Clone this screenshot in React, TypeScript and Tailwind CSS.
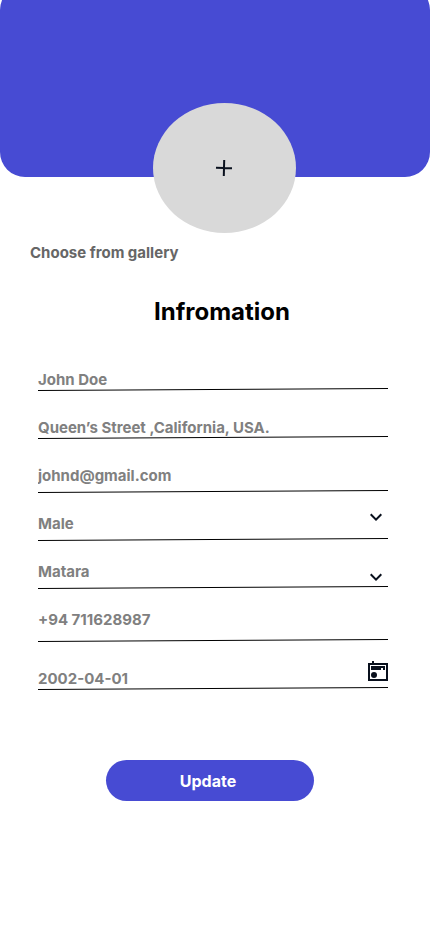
import type { ReactNode } from "react";

const fieldText =
  "-ml-1 block h-5 w-full appearance-none bg-transparent p-0 pl-1 text-[15px] leading-5 font-bold text-[#808080] outline-none";

function Underline() {
  return (
    <svg className="-mt-[2px] block h-[3px] w-full" viewBox="0 0 350 3" preserveAspectRatio="none" aria-hidden="true">
      <path d="M0 2.5L350 0.5" stroke="#000" strokeWidth="1" fill="none" />
    </svg>
  );
}

function Chevron({ className }: { className: string }) {
  return (
    <svg className={`pointer-events-none absolute right-0 size-6 ${className}`} viewBox="0 0 24 24" fill="#09101D" aria-hidden="true">
      <path d="M7.41 8.58L12 13.17l4.59-4.59L18 10l-6 6-6-6z" />
    </svg>
  );
}

function CalendarIcon() {
  return (
    <svg className="block size-5" viewBox="0 0 20 20" fill="#09101D" aria-hidden="true">
      <path fillRule="evenodd" d="M4 0h2v2h14v18H0V2h4zM2 4v14h16V4z" />
      <path d="M3 5h14v4h-2V7h-2v2H3z" />
      <circle cx="6" cy="14" r="3" />
    </svg>
  );
}

function Field({ spacing, children }: { spacing: string; children: ReactNode }) {
  return (
    <div className={`relative ${spacing}`}>
      {children}
      <Underline />
    </div>
  );
}

export default function App() {
  return (
    <main className="flex min-h-screen flex-col overflow-hidden bg-white font-['Inter',sans-serif]">
      <header className="-mt-[15px] h-48 rounded-[25px] bg-[#474BD3]" />

      <div className="-mt-[74px] flex justify-center pl-[19px]">
        <button
          type="button"
          aria-label="Add photo"
          className="flex h-[130px] w-[143px] items-center justify-center rounded-[50%] bg-[#D9D9D9] pr-px"
        >
          <svg className="size-6" viewBox="0 0 24 24" stroke="#09101D" strokeWidth="2" aria-hidden="true">
            <path d="M12.2 4L11.8 20M4 11.8L20 12.2" />
          </svg>
        </button>
      </div>

      <button
        type="button"
        className="mt-[10px] ml-[30px] self-start text-[15px] leading-5 font-bold text-[#666666]"
      >
        Choose from gallery
      </button>

      <h1 className="mt-[33px] pl-[14px] text-center text-2xl leading-8 font-bold text-black">Infromation</h1>

      <form className="mt-[42px] flex flex-col pr-[42px] pl-[38px]" onSubmit={(e) => e.preventDefault()}>
        <Field spacing="mb-[27px]">
          <input aria-label="Name" type="text" defaultValue="John Doe" className={fieldText} />
        </Field>
        <Field spacing="mb-[27px]">
          <input aria-label="Address" type="text" defaultValue="Queen’s Street ,California, USA." className={fieldText} />
        </Field>
        <Field spacing="mb-[21px]">
          <input aria-label="Email" type="email" defaultValue="johnd@gmail.com" className={`${fieldText} mb-[6px]`} />
        </Field>
        <Field spacing="mb-[21px]">
          <select aria-label="Gender" defaultValue="Male" className={`${fieldText} mb-[6px]`}>
            <option>Male</option>
            <option>Female</option>
          </select>
          <Chevron className="-top-[9px]" />
        </Field>
        <Field spacing="mb-[21px]">
          <select aria-label="City" defaultValue="Matara" className={`${fieldText} mb-[6px]`}>
            <option>Matara</option>
            <option>Colombo</option>
          </select>
          <Chevron className="top-[3px]" />
        </Field>
        <Field spacing="mb-[27px]">
          <input aria-label="Phone" type="tel" defaultValue="+94 711628987" className={`${fieldText} mb-[11px]`} />
        </Field>
        <Field spacing="mb-[70px]">
          <input aria-label="Date of birth" type="text" defaultValue="2002-04-01" className={fieldText} />
          <button type="button" aria-label="Open calendar" className="absolute right-0 bottom-[9px]">
            <CalendarIcon />
          </button>
        </Field>

        <div className="-mr-8 -ml-[38px] flex justify-center">
          <button
            type="submit"
            className="h-[41px] w-52 rounded-full bg-[#474BD3] pt-px pr-1 text-base leading-5 font-bold text-white"
          >
            Update
          </button>
        </div>
      </form>
    </main>
  );
}
